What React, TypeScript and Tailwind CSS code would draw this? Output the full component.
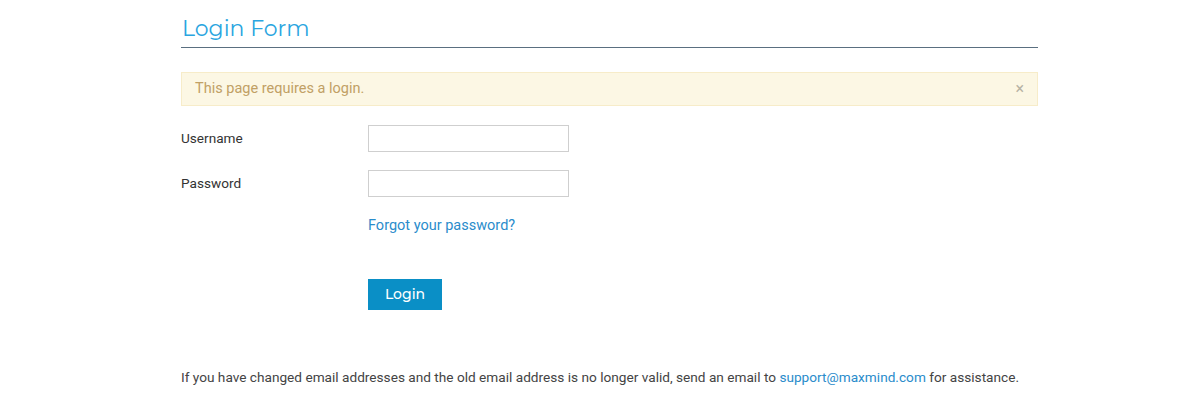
import React from "react";

export default function App() {
  return (
    <div className="w-[1200px] h-[413px] bg-white" style={{ fontFamily: "Roboto, 'Liberation Sans', sans-serif" }}>
      <div className="ml-[181px] w-[857px] pt-[15px]">
        <h1
          className="text-[22px] leading-[28px] text-[#2aa5e0] pb-[4px] border-b-[1.5px] border-[#5a6f80] pl-[1px]"
          style={{ fontFamily: "Montserrat, 'Open Sans', 'Noto Sans', sans-serif" }}
        >
          Login Form
        </h1>
        <div className="mt-[24px] h-[34px] bg-[#fcf7e4] border border-[#f7ecc9] flex items-center justify-between pl-[13px] pr-[13px]">
          <span className="text-[14.5px] text-[#c1a065]">This page requires a login.</span>
          <span className="text-[16px] text-[#b7b2a3] leading-none">×</span>
        </div>
        <div className="mt-[19px] flex items-center h-[26px]">
          <label className="w-[187px] text-[13.6px] text-[#333]">Username</label>
          <input className="w-[201px] h-[27px] border border-[#cfcfcf] outline-none" />
        </div>
        <div className="mt-[19px] flex items-center h-[26px]">
          <label className="w-[187px] text-[13.6px] text-[#333]">Password</label>
          <input type="password" className="w-[201px] h-[27px] border border-[#cfcfcf] outline-none" />
        </div>
        <div className="ml-[187px] mt-[17px]">
          <a className="text-[14.5px] text-[#2a8ccb]">Forgot your password?</a>
        </div>
        <div className="ml-[187px] mt-[42px]">
          <button
            className="w-[74px] h-[31px] bg-[#0a8fc6] text-white text-[14px] font-medium"
            style={{ fontFamily: "Montserrat, 'Open Sans', 'Noto Sans', sans-serif" }}
          >
            Login
          </button>
        </div>
        <p className="mt-[57px] text-[13.65px] text-[#444]">
          If you have changed email addresses and the old email address is no longer valid, send an email to{" "}
          <a className="text-[#2a8ccb]">support@maxmind.com</a> for assistance.
        </p>
      </div>
    </div>
  );
}
